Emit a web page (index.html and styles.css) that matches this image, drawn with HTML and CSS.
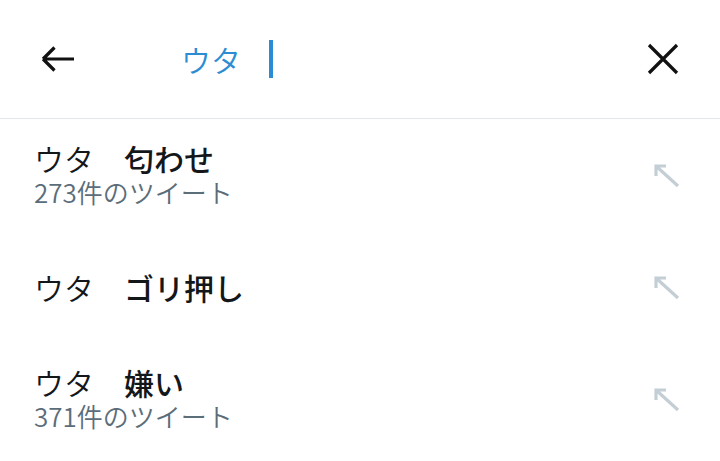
FILE: index.html
```html
<!DOCTYPE html>
<html lang="ja">
<head>
<meta charset="utf-8">
<link rel="stylesheet" href="styles.css">
</head>
<body>
<div class="header">
  <svg class="back" width="36" height="36" viewBox="0 0 36 36"><path d="M3 18 H34 M3 18 L14.5 6.5 M3 18 L14.5 29.5" fill="none" stroke="#111" stroke-width="3.2"/></svg>
  <div class="query">ウタ</div>
  <div class="cursor"></div>
  <div class="spacer"></div>
  <svg class="close" width="32" height="32" viewBox="0 0 32 32"><path d="M2 2 L30 30 M30 2 L2 30" fill="none" stroke="#111" stroke-width="3.2"/></svg>
</div>
<div class="list">
  <div class="row">
    <div class="texts">
      <div class="title"><span class="q">ウタ</span>　<b>匂わせ</b></div>
      <div class="sub">273件のツイート</div>
    </div>
    <svg class="fill" width="26" height="24" viewBox="0 0 26 24"><path d="M2 12 V2 H12 M2 2 L24 22" fill="none" stroke="#c3ced5" stroke-width="3.2"/></svg>
  </div>
  <div class="row">
    <div class="texts">
      <div class="title"><span class="q">ウタ</span>　<b>ゴリ押し</b></div>
    </div>
    <svg class="fill" width="26" height="24" viewBox="0 0 26 24"><path d="M2 12 V2 H12 M2 2 L24 22" fill="none" stroke="#c3ced5" stroke-width="3.2"/></svg>
  </div>
  <div class="row">
    <div class="texts">
      <div class="title"><span class="q">ウタ</span>　<b>嫌い</b></div>
      <div class="sub">371件のツイート</div>
    </div>
    <svg class="fill" width="26" height="24" viewBox="0 0 26 24"><path d="M2 12 V2 H12 M2 2 L24 22" fill="none" stroke="#c3ced5" stroke-width="3.2"/></svg>
  </div>
</div>
</body>
</html>
```
FILE: styles.css
```css
html, body {
  margin: 0;
  padding: 0;
  background: #fff;
  width: 720px;
  height: 461px;
  overflow: hidden;
  font-family: "Noto Sans CJK JP", "Noto Sans", sans-serif;
}
.header {
  height: 118px;
  border-bottom: 1px solid #e3e7ea;
  display: flex;
  align-items: center;
  padding: 0 41px 0 40px;
  box-sizing: content-box;
}
.back {
  flex: none;
}
.query {
  margin-left: 105px;
  font-size: 30px;
  line-height: 36px;
  font-weight: 350;
  color: #2b8cd4;
}
.cursor {
  width: 4px;
  height: 38px;
  background: #2b8cd4;
  margin-left: 28px;
}
.spacer { flex: 1; }
.close { flex: none; }
.list {
  display: flex;
  flex-direction: column;
}
.row {
  height: 112px;
  display: flex;
  align-items: center;
  padding: 0 40px 0 34px;
}
.texts {
  flex: 1;
  display: flex;
  flex-direction: column;
}
.title {
  font-size: 30px;
  line-height: 33px;
  color: #14171a;
}
.title .q {
  font-weight: 350;
}
.title b {
  font-weight: 500;
}
.sub {
  font-size: 26px;
  line-height: 33px;
  font-weight: 350;
  color: #5b6d79;
}
.fill {
  flex: none;
  margin-top: 2px;
}
```
